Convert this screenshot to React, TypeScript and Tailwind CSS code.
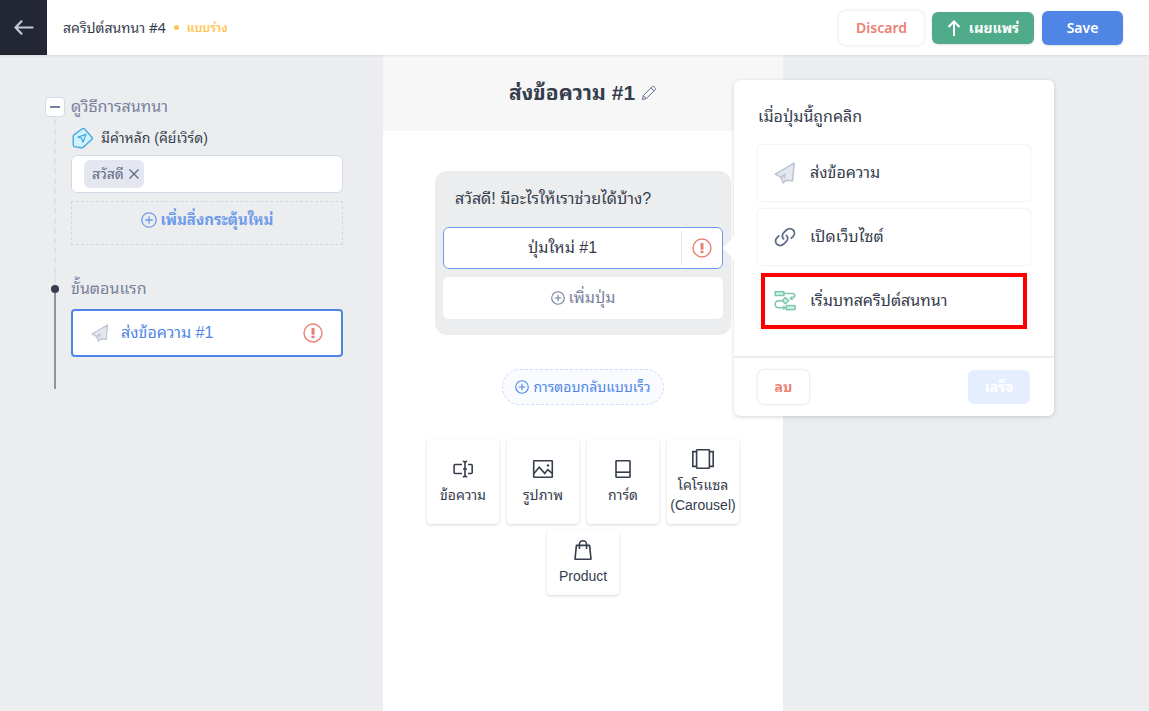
import { ReactNode } from "react";

const PlusCircle = ({ className }: { className: string }) => (
  <svg viewBox="0 0 16 16" fill="none" stroke="currentColor" strokeWidth="1.3" className={className} aria-hidden="true">
    <circle cx="8" cy="8" r="7.2" />
    <path d="M8 4.2v7.6M4.2 8h7.6" />
  </svg>
);

const AlertIcon = () => (
  <svg viewBox="0 0 20 20" fill="none" className="size-5 shrink-0" aria-hidden="true">
    <circle cx="10" cy="10" r="9" stroke="#ea8074" strokeWidth="1.4" />
    <rect x="8.5" y="5" width="3" height="6.8" rx="0.6" fill="#ea8074" />
    <rect x="8.5" y="12.8" width="3" height="2.4" rx="0.6" fill="#ea8074" />
  </svg>
);

const PlaneIcon = ({ className }: { className: string }) => (
  <svg viewBox="0 0 22 22" fill="#e4e7ef" stroke="#bcc3d3" strokeWidth="1.5" strokeLinejoin="round" className={className} aria-hidden="true">
    <path d="M20.2 1.2 1.2 12.2l5.6 3 2.4 5.8 2.8-2.8 6.6.8z" />
    <path d="m6.8 15.2 4.2-3-1 4" fill="none" />
  </svg>
);

const LinkIcon = () => (
  <svg viewBox="0 0 22 22" fill="none" stroke="#626c88" strokeWidth="1.8" strokeLinecap="round" className="size-[22px]" aria-hidden="true">
    <path d="M9.6 12.8c-1.9-1.7-1.7-4.3.2-6.2L12.4 4a4.7 4.7 0 0 1 6.7 0c1.9 1.9 1.8 4.6 0 6.4l-1.8 1.8" />
    <path d="M12.4 9.4c1.9 1.7 1.7 4.3-.2 6.2l-2.6 2.6a4.7 4.7 0 0 1-6.7 0c-1.9-1.9-1.8-4.6 0-6.4l1.8-1.8" />
  </svg>
);

const FlowIcon = () => (
  <svg viewBox="0 0 22 22" fill="none" stroke="#7ec6ac" strokeWidth="1.5" className="size-[22px]" aria-hidden="true">
    <rect x="1.2" y="1.7" width="8.6" height="3.8" fill="#d3f3e7" />
    <rect x="12.4" y="15.6" width="8.6" height="4" fill="#d3f3e7" />
    <path d="m11.4 7.6 3.2 3.1-3.2 3.1-3.2-3.1z" fill="#d3f3e7" />
    <path d="M10 3.4h8.4c1.6 0 2.5.7 2.5 1.9 0 1.6-.9 2.7-3.9 3" />
    <path d="m18.6 6.6-2.4 1.8 2.4 1.5" />
    <path d="M8 10.7H4.7A3.4 3.4 0 0 0 1.2 14c0 2.1 1.4 3.8 3.6 3.8h6.4" />
    <path d="m9.2 16 2 1.8-2 1.7" />
  </svg>
);

const KeywordIcon = () => (
  <svg viewBox="0 0 22 22" fill="#d0f2ff" stroke="#46a9e2" strokeWidth="1.4" strokeLinejoin="round" className="size-[22px]" aria-hidden="true">
    <path d="M11.3 1.8 3.2 7.6c-.7.5-1.1 1.2-1.1 2l.2 8.5c0 1 .6 1.7 1.6 1.8l6.6.8c.8.1 1.5-.1 2.1-.7l8.1-7.4c.7-.7.8-1.6.1-2.4l-7-8.1c-.7-.8-1.6-.9-2.5-.3z" />
    <path d="M15 7.4 7 10.1l3.7 1.2 1.3 3.9z" strokeWidth="1.2" />
  </svg>
);

const PencilIcon = () => (
  <svg viewBox="0 0 16 16" fill="none" stroke="#626c88" strokeWidth="1" strokeLinejoin="round" className="size-4" aria-hidden="true">
    <path d="m1.4 14.6.9-4L11 1.9c.7-.7 1.5-.7 2.2 0l.8.8c.7.7.7 1.5 0 2.2l-8.7 8.7z" />
    <path d="m2.3 10.6 3 3M10 2.9l3 3" />
  </svg>
);

const TextIcon = () => (
  <>
    <path d="M10 5.5H3.100a1 1 0 0 0-1 1v7a1 1 0 0 0 1 1H10M16 5.5h3.200a1 1 0 0 1 1 1v7a1 1 0 0 1-1 1H16" />
    <path d="M10.8 2.2c1.4 0 2.2.5 2.2 1.5v12.6c0 1-.8 1.5-2.2 1.5M15.2 2.2c-1.4 0-2.2.5-2.2 1.5M15.2 17.8c-1.4 0-2.2-.5-2.2-1.5M11 10h4" />
  </>
);

const ImageIcon = () => (
  <>
    <rect x="1.7" y="1.7" width="18.6" height="16.6" rx="0.6" />
    <path d="m2 14.4 5.2-6.2 5.6 6.2 3-3.8 4.4 3.8" />
    <circle cx="16" cy="6.4" r="1.2" fill="currentColor" stroke="none" />
  </>
);

const CardIcon = () => (
  <>
    <rect x="4" y="1.7" width="14" height="16.6" rx="0.6" />
    <path d="M4 13.2h14" />
  </>
);

const CarouselIcon = () => (
  <>
    <rect x="4.6" y="0.8" width="12.8" height="18.4" rx="0.6" />
    <path d="M4.4 2.6H.8v14.8h3.6M17.6 2.6h3.6v14.8h-3.6" />
  </>
);

const BagIcon = () => (
  <>
    <path d="M4.4 5.4h13.2L19 19.2H3z" strokeLinejoin="round" />
    <path d="M7.4 9V4.4a3.6 3.6 0 0 1 7.2 0V9" />
  </>
);

interface IBlock {
  label: string[];
  icon: ReactNode;
  height: string;
}

const blocks: IBlock[] = [
  { label: ["ข้อความ"], icon: <TextIcon />, height: "h-[85px]" },
  { label: ["รูปภาพ"], icon: <ImageIcon />, height: "h-[85px]" },
  { label: ["การ์ด"], icon: <CardIcon />, height: "h-[85px]" },
  { label: ["โคโรแซล", "(Carousel)"], icon: <CarouselIcon />, height: "h-[85px]" },
  { label: ["Product"], icon: <BagIcon />, height: "h-[65px]" },
];

const actions = [
  { label: "ส่งข้อความ", icon: <PlaneIcon className="size-[22px]" />, highlighted: false },
  { label: "เปิดเว็บไซต์", icon: <LinkIcon />, highlighted: false },
  { label: "เริ่มบทสคริปต์สนทนา", icon: <FlowIcon />, highlighted: true },
];

const Header = () => (
  <header className="relative z-10 flex h-[55px] items-center bg-white pr-[26px] font-['Noto_Sans','Noto_Sans_Thai_Looped','Loma','Noto_Sans_Thai',sans-serif] shadow-[0_1px_2px_rgba(0,0,0,0.08)]">
    <button aria-label="Back" className="flex h-full w-[47px] items-center justify-center bg-[#232733] text-[#c3c9d6]">
      <svg viewBox="0 0 20 16" fill="none" stroke="currentColor" strokeWidth="2.2" strokeLinecap="round" strokeLinejoin="round" className="h-4 w-5" aria-hidden="true">
        <path d="M18.5 7.5h-17M7.5 1.3l-6 6.2 6 6.2" />
      </svg>
    </button>
    <h1 className="ml-4 text-sm text-[#363d4d]">สคริปต์สนทนา #4</h1>
    <span className="mx-2 size-[5px] rounded-full bg-[#ffc554]"></span>
    <span className="text-xs font-semibold text-[#ffc554]">แบบร่าง</span>
    <div className="ml-auto flex items-center gap-2 text-sm font-semibold">
      <button className="h-[34px] w-[85px] rounded-md bg-white text-[#ea8074] shadow-[0_0_3px_rgba(0,0,0,0.15)]">Discard</button>
      <button className="flex h-8 w-[102px] items-center justify-center gap-2 rounded-md bg-[#50ab8b] font-bold text-white shadow-sm">
        <svg viewBox="0 0 14 16" fill="none" stroke="currentColor" strokeWidth="2" className="h-4 w-3.5" aria-hidden="true">
          <path d="M7 16V1.5M1.5 7 7 1.5 12.5 7" />
        </svg>
        เผยแพร่
      </button>
      <button className="h-[34px] w-[81px] rounded-md bg-[#4f86e6] text-white shadow-sm">Save</button>
    </div>
  </header>
);

const Sidebar = () => (
  <aside className="w-1/3 pt-[42px] pr-10 pl-[45px]">
    <section className="flex gap-1.5">
      <div className="flex w-5 flex-col items-center">
        <button aria-label="Collapse" className="flex size-5 shrink-0 items-center justify-center rounded border border-[#d0dbe6] bg-white">
          <span className="h-0.5 w-2.5 bg-[#77819d]"></span>
        </button>
        <div className="mt-0.5 flex-1 border-l-2 border-dashed border-[#dde2ea]"></div>
      </div>
      <div className="min-w-0 flex-1 pb-7">
        <h2 className="h-5 text-base leading-5 text-[#77819d]">ดูวิธีการสนทนา</h2>
        <label htmlFor="keyword" className="mt-2.5 flex h-[22px] items-center gap-2 text-sm text-[#363d4d]">
          <KeywordIcon />
          มีคำหลัก (คีย์เวิร์ด)
        </label>
        <div className="mt-1.5 flex h-[38px] items-center rounded-md border border-[#d0dbe6] bg-white px-3">
          <span className="flex h-7 shrink-0 items-center gap-1 rounded-md bg-[#e4e7ef] pr-1 pl-2 text-sm text-[#626c88]">
            สวัสดี
            <button aria-label="Remove สวัสดี">
              <svg viewBox="0 0 12 12" stroke="currentColor" strokeWidth="1.4" className="size-3" aria-hidden="true">
                <path d="m1.5 1.5 9 9M10.5 1.5l-9 9" />
              </svg>
            </button>
          </span>
          <input id="keyword" className="ml-2 min-w-0 flex-1 outline-none" />
        </div>
        <button className="mt-2 flex h-11 w-full items-start justify-center gap-1 border border-dashed border-[#ccd9e6] pt-2 text-[15px] leading-5 font-bold text-[#6e9bea]">
          <PlusCircle className="mt-0.5 size-4" />
          เพิ่มสิ่งกระตุ้นใหม่
        </button>
      </div>
    </section>
    <section className="flex gap-1.5">
      <div className="flex w-5 flex-col items-center">
        <div className="h-3 w-0.5 bg-[#dde6ee]"></div>
        <div className="size-2 shrink-0 rounded-full bg-[#363d4d]"></div>
        <div className="w-0.5 flex-1 bg-[#8f959e]"></div>
      </div>
      <div className="min-w-0 flex-1 pt-1.5 pb-8">
        <h2 className="h-5 text-base leading-5 text-[#77819d]">ขั้นตอนแรก</h2>
        <button className="mt-2.5 flex h-12 w-full items-center rounded border-2 border-[#4f86e6] bg-white px-[18px] text-base text-[#4f86e6]">
          <PlaneIcon className="size-[18px]" />
          <span className="mr-auto ml-3">ส่งข้อความ #1</span>
          <AlertIcon />
        </button>
      </div>
    </section>
  </aside>
);

const ActionPopover = () => (
  <div className="absolute top-1/2 left-full z-20 ml-[11px] w-80 -translate-y-1/2 rounded-md bg-white shadow-[0_1px_4px_rgba(0,0,0,0.16)]">
    <div className="absolute top-1/2 -left-2 size-4 -translate-y-1/2 rotate-45 bg-white"></div>
    <div className="relative px-6 pt-[25px] pb-[27px]">
      <h3 className="h-6 text-base leading-6 text-[#363d4d]">เมื่อปุ่มนี้ถูกคลิก</h3>
      <div className="mt-4 flex flex-col gap-2">
        {actions.map((action) => (
          <button
            key={action.label}
            className="relative flex h-14 items-center gap-3.5 rounded px-4 text-base text-[#363d4d] shadow-[0_0_2px_rgba(0,0,0,0.16)]"
          >
            {action.icon}
            {action.label}
            {action.highlighted && <span className="absolute inset-x-[3px] inset-y-0 border-4 border-[#ff0000]"></span>}
          </button>
        ))}
      </div>
    </div>
    <div className="flex items-center justify-between border-t-2 border-[#e8edf2] px-6 py-3 text-sm font-bold">
      <button className="h-[34px] w-[51px] rounded-md bg-white text-[#ea8074] shadow-[0_0_3px_rgba(0,0,0,0.18)]">ลบ</button>
      <button className="h-[34px] w-[62px] rounded-md bg-[#e5eeff] text-white">เสร็จ</button>
    </div>
  </div>
);

const MessageEditor = () => (
  <main className="w-[400px] shrink-0 bg-white">
    <div className="flex h-19 items-center justify-center gap-1.5 bg-[#f7f7f7]">
      <h2 className="text-[21px] font-bold text-[#363d4d]">ส่งข้อความ #1</h2>
      <button aria-label="Rename">
        <PencilIcon />
      </button>
    </div>
    <div className="flex flex-col items-center pt-10">
      <div className="w-[296px] rounded-xl bg-[#ecedef] px-2 pb-4">
        <p className="h-14 px-3 pt-4 text-base leading-6 text-[#363d4d]">สวัสดี! มีอะไรให้เราช่วยได้บ้าง?</p>
        <div className="relative">
          <div className="flex h-[42px] items-center rounded-md border border-[#6e9bea] bg-white text-base text-[#363d4d]">
            <button className="h-full flex-1">ปุ่มใหม่ #1</button>
            <div className="flex h-[34px] w-[41px] items-center justify-center border-l border-[#dfe2ea]">
              <AlertIcon />
            </div>
          </div>
          <ActionPopover />
        </div>
        <button className="mt-2 flex h-[42px] w-full items-center justify-center gap-1 rounded-md bg-white text-base text-[#77819d]">
          <PlusCircle className="size-3.5" />
          เพิ่มปุ่ม
        </button>
      </div>
      <button className="mt-[34px] flex h-9 w-[162px] items-center justify-center gap-1 rounded-full border border-dashed border-[#cbddff] bg-[#fafbff] text-sm text-[#4f86e6]">
        <PlusCircle className="size-3.5" />
        การตอบกลับแบบเร็ว
      </button>
      <div className="mt-[34px] flex flex-wrap justify-center gap-x-2 gap-y-1.5 px-10">
        {blocks.map((block) => (
          <button
            key={block.label[0]}
            className={`${block.height} flex w-[72px] flex-col items-center justify-center rounded text-sm leading-5 text-[#363d4d] shadow-[0_1px_3px_rgba(0,0,0,0.16)]`}
          >
            <svg viewBox="0 0 22 20" fill="none" stroke="currentColor" strokeWidth="1.6" className="mb-1.5 h-5 w-[22px] shrink-0" aria-hidden="true">
              {block.icon}
            </svg>
            {block.label.map((line) => (
              <span key={line}>{line}</span>
            ))}
          </button>
        ))}
      </div>
    </div>
  </main>
);

const App = () => {
  return (
    <div className="flex min-h-screen flex-col overflow-hidden bg-[#ecedef] font-['Liberation_Sans','Noto_Sans_Thai_Looped','Loma','Noto_Sans_Thai',sans-serif]">
      <Header />
      <div className="flex flex-1">
        <Sidebar />
        <MessageEditor />
      </div>
    </div>
  );
};

export default App;
